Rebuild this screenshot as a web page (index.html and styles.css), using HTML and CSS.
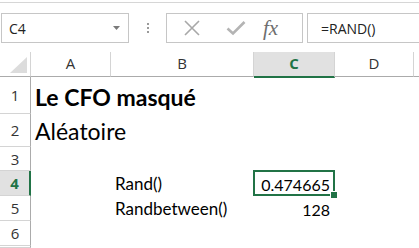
FILE: index.html
```html
<!DOCTYPE html>
<html>
<head>
<meta charset="utf-8">
<link rel="stylesheet" href="styles.css">
</head>
<body>
<div class="app">
  <div class="ribbon-edge"></div>
  <div class="fbar">
    <div class="namebox">
      <span class="nb-text">C4</span>
      <svg class="nb-arrow" width="7" height="4" viewBox="0 0 7 4"><path d="M0 0H7L3.5 4Z" fill="#7a7a7a"/></svg>
    </div>
    <div class="dots"><i></i><i></i><i></i></div>
    <div class="iconbox">
      <svg class="ic ic-x" width="18" height="18" viewBox="0 0 18 18"><path d="M2 2L16 16M16 2L2 16" stroke="#a8a8a8" stroke-width="1.6" fill="none"/></svg>
      <svg class="ic ic-check" width="20" height="16" viewBox="0 0 20 16"><path d="M1.5 8.5L7 13.5L18.5 2" stroke="#b4b4b4" stroke-width="2.6" fill="none"/></svg>
      <span class="fx">fx</span>
    </div>
    <div class="formula">=RAND()</div>
  </div>
  <div class="sheet">
    <div class="corner"><svg width="17" height="16" viewBox="0 0 17 16"><path d="M17 0V16H0Z" fill="#dcdcdc"/></svg></div>
    <div class="ch">A</div>
    <div class="ch">B</div>
    <div class="ch ch-sel">C</div>
    <div class="ch">D</div>
    <div class="ch ch-last"></div>

    <div class="rh">1</div>
    <div class="c title">Le CFO masqué</div>
    <div class="c"></div><div class="c"></div><div class="c"></div><div class="c"></div>

    <div class="rh">2</div>
    <div class="c sub">Aléatoire</div>
    <div class="c"></div><div class="c"></div><div class="c"></div><div class="c"></div>

    <div class="rh">3</div>
    <div class="c"></div><div class="c"></div><div class="c"></div><div class="c"></div><div class="c"></div>

    <div class="rh rh-sel">4</div>
    <div class="c"></div>
    <div class="c">Rand()</div>
    <div class="c num sel">0.474665<span class="handle"></span></div>
    <div class="c"></div><div class="c"></div>

    <div class="rh">5</div>
    <div class="c"></div>
    <div class="c">Randbetween()</div>
    <div class="c num">128</div>
    <div class="c"></div><div class="c"></div>

    <div class="rh">6</div>
    <div class="c"></div><div class="c"></div><div class="c"></div><div class="c"></div><div class="c"></div>

    <div class="rh"></div>
    <div class="c"></div><div class="c"></div><div class="c"></div><div class="c"></div><div class="c"></div>
  </div>
</div>
</body>
</html>
```
FILE: styles.css
```css
html, body {
  margin: 0;
  padding: 0;
  background: #fff;
}
.app {
  width: 419px;
  height: 248px;
  overflow: hidden;
  font-family: "Lato", "Liberation Sans", sans-serif;
  color: #000;
}
.ribbon-edge {
  height: 2px;
  border-bottom: 1px solid #d6d6d6;
}
.fbar {
  display: flex;
  align-items: center;
  margin-top: 10px;
  height: 30px;
}
.namebox {
  box-sizing: border-box;
  margin-left: 1px;
  width: 128px;
  height: 30px;
  border: 1px solid #c6c6c6;
  display: flex;
  align-items: center;
  justify-content: space-between;
  padding: 0 8px 0 7px;
  font-family: "Open Sans", sans-serif;
  font-size: 14px;
  color: #222;
}
.dots {
  width: 37px;
  display: flex;
  flex-direction: column;
  align-items: center;
  gap: 2px;
}
.dots i {
  display: block;
  width: 2px;
  height: 2px;
  background: #9a9a9a;
}
.iconbox {
  box-sizing: border-box;
  width: 137px;
  height: 30px;
  border: 1px solid #c6c6c6;
  display: flex;
  align-items: center;
  padding-left: 16px;
}
.ic-x { margin-right: 25px; }
.ic-check { margin-right: 17px; }
.fx {
  font-family: "Liberation Serif", serif;
  font-style: italic;
  font-size: 21px;
  color: #6e6e6e;
}
.formula {
  box-sizing: border-box;
  margin-left: 4px;
  flex: 1;
  height: 30px;
  border: 1px solid #c6c6c6;
  border-right: none;
  display: flex;
  align-items: center;
  padding-left: 13px;
  font-family: "Open Sans", sans-serif;
  font-size: 14px;
  color: #222;
}
.sheet {
  margin-top: 9px;
  display: grid;
  grid-template-columns: 31px 80px 143px 81px 79px 1fr;
  grid-template-rows: 25px 37px 33px 24px 25px 25px 25px 1fr;
}
.corner {
  border-right: 1px solid #d4d4d4;
  border-bottom: 1px solid #ababab;
  display: flex;
  align-items: flex-end;
  justify-content: flex-end;
  padding: 0 3px 3px 0;
}
.ch {
  border-right: 1px solid #d4d4d4;
  border-bottom: 1px solid #ababab;
  display: flex;
  align-items: center;
  justify-content: center;
  padding-bottom: 2px;
  font-family: "Open Sans", sans-serif;
  font-size: 15px;
  color: #333;
}
.ch-last { border-right: none; }
.ch-sel {
  background: #e1e1e1;
  color: #217346;
  font-weight: 700;
  border-bottom: 2px solid #217346;
  margin-bottom: -1px;
}
.rh {
  border-right: 1px solid #ababab;
  border-bottom: 1px solid #d4d4d4;
  display: flex;
  align-items: center;
  justify-content: center;
  font-family: "Open Sans", sans-serif;
  font-size: 15px;
  color: #333;
}
.rh-sel {
  background: #e1e1e1;
  color: #217346;
  font-weight: 700;
  border-right: 2px solid #217346;
}
.c {
  display: flex;
  align-items: flex-end;
  padding: 0 4px 2px 4px;
  white-space: nowrap;
  font-size: 17px;
  min-width: 0;
  position: relative;
}
.title {
  font-size: 23px;
  font-weight: 700;
  padding-bottom: 3px;
}
.sub {
  font-size: 23px;
}
.num {
  justify-content: flex-end;
  padding-right: 5px;
  font-size: 16px;
}
.sel {
  box-shadow: inset 0 0 0 2px #217346;
  margin: -1px 0 0 -1px;
  padding-right: 5px;
}
.handle {
  position: absolute;
  right: -3px;
  bottom: -3px;
  width: 6px;
  height: 6px;
  background: #217346;
  border: 1px solid #fff;
}
```
